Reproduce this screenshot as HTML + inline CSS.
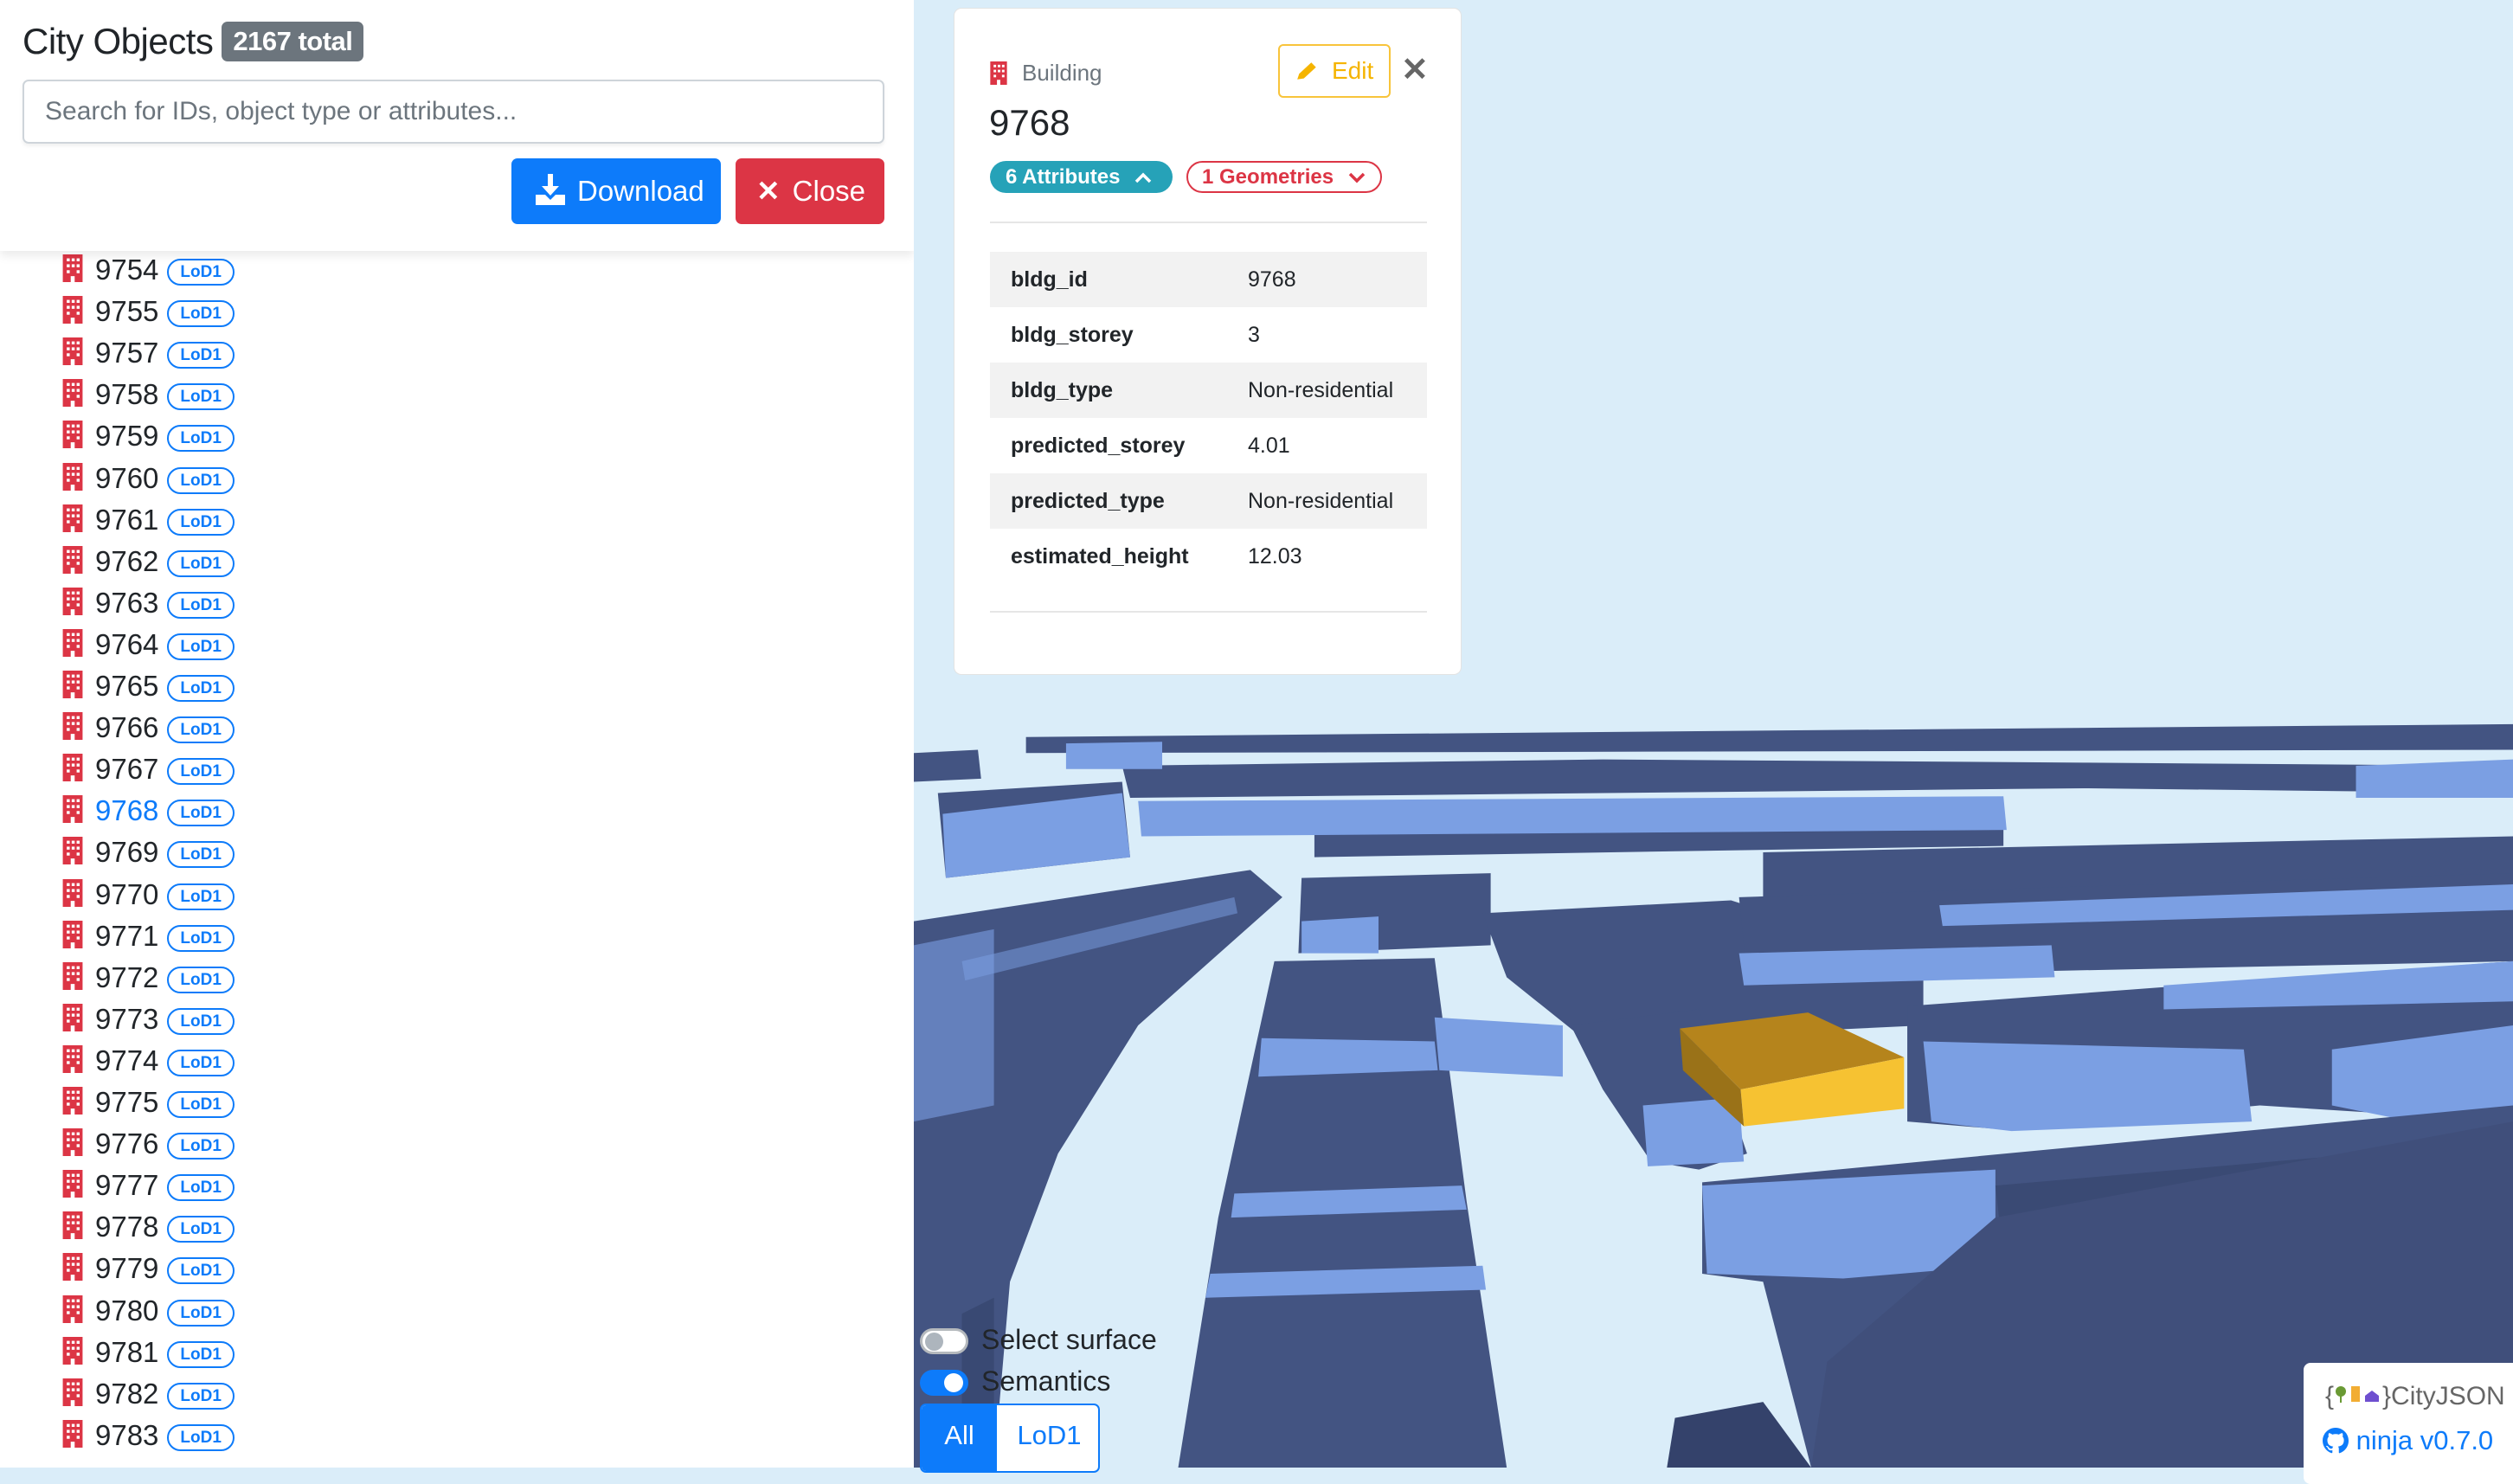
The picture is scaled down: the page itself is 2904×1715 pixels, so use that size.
<!DOCTYPE html>
<html><head><meta charset="utf-8"><style>
*{box-sizing:border-box;margin:0;padding:0}
body{width:2904px;height:1696px;overflow:hidden;font-family:"Liberation Sans",sans-serif;background:#daedf9;position:relative;color:#212529}
#left{position:absolute;left:0;top:0;width:1056px;height:1696px;background:#fff;overflow:hidden}
#hdr{position:absolute;left:0;top:0;width:1056px;height:290px;background:#fff;box-shadow:0 6px 10px rgba(0,0,0,.08);z-index:2}
h1{position:absolute;left:26px;top:24px;font-size:42px;font-weight:normal;letter-spacing:-0.5px}
.badge{display:inline-block;background:#6c757d;color:#fff;font-size:31px;font-weight:bold;padding:5px 13px;border-radius:7px;vertical-align:4px;margin-left:10px}
#search{position:absolute;left:26px;top:92px;width:996px;height:74px;border:2px solid #ced4da;border-radius:7px;font-size:30px;color:#6c757d;padding:18px 24px;box-shadow:0 3px 5px rgba(0,0,0,.06)}
.btn{position:absolute;top:183px;height:76px;border-radius:7px;color:#fff;font-size:33px;line-height:76px}
#dl{left:591px;width:242px;background:#0d7bfa;padding-left:28px}
#cl{left:850px;width:172px;background:#dc3545;padding-left:24px}
.row{position:absolute;left:72px;height:48px;font-size:33px;line-height:48px;white-space:nowrap}
.row svg{vertical-align:-3px;margin-right:14px}
.lod{display:inline-block;border:2.5px solid #0d7bfa;color:#0d7bfa;font-size:19px;font-weight:bold;border-radius:16px;padding:0 13px;height:31px;line-height:27px;vertical-align:3px;margin-left:10px}
#map{position:absolute;left:1056px;top:0}
#card{position:absolute;left:1102px;top:9px;width:587px;height:771px;background:#fff;border-radius:9px;border:1px solid #e3e3e3}
.tbl{position:absolute;left:41px;width:505px;font-size:25px}
.tr{height:64px;line-height:64px;position:relative}
.tr:nth-child(odd){background:#f2f2f2}
.tr b{position:absolute;left:24px}
.tr span{position:absolute;left:298px}
.tog{position:absolute;left:1063px;width:56px;height:30px;border-radius:16px}
.lbl{position:absolute;left:1134px;font-size:32px;color:#212529}
</style></head><body>
<div id="left">
<div id="hdr">
<h1>City Objects<span class="badge">2167 total</span></h1>
<div id="search">Search for IDs, object type or attributes...</div>
<div class="btn" id="dl"><svg width="34" height="36" viewBox="0 0 34 36" style="vertical-align:-5px;margin-right:14px"><rect x="14" y="0" width="6" height="18" fill="#fff"/><path d="M7 14 L17 25 L27 14Z" fill="#fff"/><path d="M0 24 L11 24 L17 30 L23 24 L34 24 L34 36 L0 36Z" fill="#fff"/></svg>Download</div>
<div class="btn" id="cl"><span style="font-weight:bold;margin-right:14px">✕</span>Close</div>
</div>
<div id="list"></div>
</div>
<svg id="map" width="1848" height="1696" viewBox="570 0 998 916" preserveAspectRatio="none">
<rect x="570" y="0" width="998" height="916" fill="#daedf9"/>
<g fill="#435482">
<path d="M640 460 L1568 452 L1568 468 L640 470Z"/>
<path d="M570 470 L610 468 L612 486 L570 488Z"/>
<path d="M585 495 L700 488 L705 535 L590 548Z"/>
<path d="M700 478 L1000 474 L1300 476 L1568 478 L1568 495 L1300 492 L705 498Z"/>
<path d="M820 520 L1250 515 L1250 528 L820 535Z"/>
<path d="M1100 532 L1568 522 L1568 548 L1100 560Z"/>
</g>
<g fill="#7b9fe3">
<path d="M588 508 L700 495 L705 535 L590 548Z"/>
<path d="M710 500 L1250 497 L1252 518 L712 522Z"/>
<path d="M665 464 L725 463 L725 480 L665 480Z"/>
<path d="M1470 478 L1568 474 L1568 498 L1470 498Z"/>
</g>
<path d="M570 575 L780 543 L800 560 L710 640 L660 720 L630 800 L620 916 L570 916Z" fill="#435482"/>
<path d="M570 590 L620 580 L620 690 L570 700Z" fill="#7b9fe3" opacity=".6"/>
<path d="M600 600 L770 560 L772 570 L602 612Z" fill="#7b9fe3" opacity=".5"/>
<path d="M600 820 L620 810 L620 916 L600 916Z" fill="#2f3d63" opacity=".5"/>
<path d="M795 600 L895 598 L915 750 L940 916 L735 916 L760 760Z" fill="#435482"/>
<path d="M787 648 L895 650 L897 668 L785 672Z" fill="#7b9fe3"/>
<path d="M770 745 L912 740 L915 755 L768 760Z" fill="#7b9fe3"/>
<path d="M755 795 L925 790 L927 805 L752 810Z" fill="#7b9fe3"/>
<path d="M812 548 L930 545 L930 590 L810 595Z" fill="#435482"/>
<path d="M812 575 L860 572 L860 595 L812 595Z" fill="#7b9fe3"/>
<path d="M925 570 L1080 562 L1200 600 L1200 640 L990 650 L940 610Z" fill="#435482"/>
<path d="M1085 560 L1568 545 L1568 600 L1090 610Z" fill="#435482"/>
<path d="M1085 595 L1280 590 L1282 610 L1088 615Z" fill="#7b9fe3"/>
<path d="M1210 565 L1568 552 L1568 568 L1212 578Z" fill="#7b9fe3"/>
<path d="M1190 628 L1568 600 L1568 700 L1410 690 L1250 705 L1190 700Z" fill="#435482"/>
<path d="M980 640 L1060 630 L1090 720 L1060 730 L1030 725 L1000 680Z" fill="#435482"/>
<path d="M895 635 L975 640 L975 672 L898 668Z" fill="#7b9fe3"/>
<path d="M1025 690 L1085 685 L1088 725 L1028 728Z" fill="#7b9fe3"/>
<path d="M1200 650 L1400 655 L1405 700 L1255 706 L1205 700Z" fill="#7b9fe3"/>
<path d="M1455 655 L1568 640 L1568 700 L1505 700 L1455 690Z" fill="#7b9fe3"/>
<path d="M1350 615 L1568 600 L1568 625 L1350 630Z" fill="#7b9fe3"/>
<path d="M1048 642 L1128 632 L1188 660 L1086 680Z" fill="#b5841c"/>
<path d="M1086 680 L1188 660 L1188 692 L1088 703Z" fill="#f6c232"/>
<path d="M1048 642 L1086 680 L1088 703 L1050 668Z" fill="#9a7218"/>
<path d="M1062 738 L1568 690 L1568 916 L1130 916 L1100 800 L1062 795Z" fill="#435482"/>
<path d="M1062 740 L1245 730 L1245 790 L1150 798 L1065 795Z" fill="#7b9fe3"/>
<path d="M1245 740 L1568 712 L1568 760 L1250 785Z" fill="#3a4a74"/>
<path d="M1245 760 L1568 700 L1568 916 L1130 916 L1140 850Z" fill="#404f7b"/>
<path d="M1045 885 L1100 875 L1130 916 L1040 916Z" fill="#34426b"/>
</svg>
<div id="card">
<svg style="position:absolute;left:41px;top:61px" width="20" height="27" viewBox="0 0 20 28"><path d="M0 0H20V28H12V22H8V28H0Z" fill="#dc3545"/><g fill="#fff"><rect x="4" y="4" width="3" height="3"/><rect x="9" y="4" width="3" height="3"/><rect x="14" y="4" width="3" height="3"/><rect x="4" y="10" width="3" height="3"/><rect x="9" y="10" width="3" height="3"/><rect x="14" y="10" width="3" height="3"/><rect x="4" y="16" width="3" height="3"/><rect x="14" y="16" width="3" height="3"/></g></svg>
<div style="position:absolute;left:78px;top:58px;font-size:26px;color:#6c757d;line-height:32px">Building</div>
<div style="position:absolute;left:40px;top:111px;font-size:42px;line-height:1">9768</div>
<div style="position:absolute;left:374px;top:41px;width:130px;height:62px;border:2px solid #f8c43b;border-radius:6px;color:#f5b400;font-size:28px;line-height:58px;padding-left:18px"><svg width="28" height="26" viewBox="0 0 26 22" style="vertical-align:-4px;margin-right:14px"><path d="M2 20 L4 14 L17 2 L22 7 L9 19Z" fill="#f5b400"/></svg>Edit</div>
<div style="position:absolute;left:516px;top:48px;font-size:38px;font-weight:bold;color:#666">✕</div>
<div style="position:absolute;left:41px;top:176px;width:211px;height:37px;border-radius:19px;background:#26a2b8;color:#fff;font-size:24px;font-weight:bold;line-height:37px;padding-left:18px">6 Attributes <svg width="20" height="14" viewBox="0 0 20 14" style="margin-left:10px"><path d="M2 12 L10 4 L18 12" stroke="#fff" stroke-width="3.5" fill="none"/></svg></div>
<div style="position:absolute;left:268px;top:176px;width:226px;height:37px;border-radius:19px;border:2px solid #dc3545;color:#dc3545;font-size:24px;font-weight:bold;line-height:33px;padding-left:16px">1 Geometries <svg width="20" height="14" viewBox="0 0 20 14" style="margin-left:10px"><path d="M2 3 L10 11 L18 3" stroke="#dc3545" stroke-width="3.5" fill="none"/></svg></div>
<div style="position:absolute;left:41px;top:246px;width:505px;height:2px;background:#e6e6e6"></div>
<div class="tbl" style="top:281px">
<div class="tr"><b>bldg_id</b><span>9768</span></div>
<div class="tr"><b>bldg_storey</b><span>3</span></div>
<div class="tr"><b>bldg_type</b><span>Non-residential</span></div>
<div class="tr"><b>predicted_storey</b><span>4.01</span></div>
<div class="tr"><b>predicted_type</b><span>Non-residential</span></div>
<div class="tr"><b>estimated_height</b><span>12.03</span></div>
</div>
<div style="position:absolute;left:41px;top:696px;width:505px;height:2px;background:#e6e6e6"></div>
</div>
<div class="tog" style="top:1535px;background:#fff;border:3px solid #b5b9bd"><div style="position:absolute;left:3px;top:2px;width:21px;height:21px;border-radius:50%;background:#adb5bd"></div></div>
<div class="lbl" style="top:1530px">Select surface</div>
<div class="tog" style="top:1583px;background:#0d7bfa"><div style="position:absolute;left:28px;top:4px;width:22px;height:22px;border-radius:50%;background:#fff"></div></div>
<div class="lbl" style="top:1578px">Semantics</div>
<div style="position:absolute;left:1063px;top:1622px;width:208px;height:80px;border:2px solid #0d7bfa;border-radius:7px;background:#fff;overflow:hidden;font-size:31px">
<div style="position:absolute;left:0;top:0;width:87px;height:80px;background:#0d7bfa;color:#fff;text-align:center;line-height:70px">All</div>
<div style="position:absolute;left:87px;top:0;width:121px;color:#0d7bfa;text-align:center;line-height:70px">LoD1</div></div>
<div style="position:absolute;left:2662px;top:1575px;width:260px;height:140px;background:#fff;border-radius:8px">
<div style="position:absolute;left:25px;top:22px;font-size:30px;color:#666;white-space:nowrap">{<svg width="56" height="24" viewBox="0 0 56 24"><circle cx="8" cy="9" r="6" fill="#6a9a34"/><rect x="7" y="12" width="2" height="10" fill="#6a9a34"/><rect x="20" y="3" width="10" height="18" fill="#f2ad33"/><path d="M36 21 V14 L44 8 L52 14 V21Z" fill="#6e4fcf"/></svg>}CityJSON</div>
<div style="position:absolute;left:22px;top:72px;font-size:31px;color:#0d7bfa;white-space:nowrap"><svg width="30" height="30" viewBox="0 0 16 16" style="vertical-align:-5px"><path fill="#0d7bfa" d="M8 0C3.58 0 0 3.58 0 8c0 3.54 2.29 6.53 5.47 7.59.4.07.55-.17.55-.38v-1.33c-2.23.48-2.7-1.07-2.7-1.07-.36-.92-.89-1.17-.89-1.17-.73-.5.06-.49.06-.49.8.06 1.23.83 1.23.83.71 1.22 1.87.87 2.33.66.07-.52.28-.87.51-1.07-1.78-.2-3.64-.89-3.64-3.95 0-.87.31-1.59.82-2.15-.08-.2-.36-1.02.08-2.12 0 0 .67-.21 2.2.82a7.6 7.6 0 014 0c1.53-1.04 2.2-.82 2.2-.82.44 1.1.16 1.92.08 2.12.51.56.82 1.27.82 2.15 0 3.07-1.87 3.75-3.65 3.95.29.25.54.73.54 1.48v2.2c0 .21.15.46.55.38A8.01 8.01 0 0016 8c0-4.42-3.58-8-8-8z"/></svg> ninja v0.7.0</div></div>
<script>
var ids=[9754,9755];for(var i=9757;i<=9783;i++)ids.push(i);
var h='',ic='<svg width="24" height="32" viewBox="0 0 20 28"><path d="M0 0H20V28H12V22H8V28H0Z" fill="#dc3545"/><g fill="#fff"><rect x="4" y="4" width="3" height="3"/><rect x="9" y="4" width="3" height="3"/><rect x="14" y="4" width="3" height="3"/><rect x="4" y="10" width="3" height="3"/><rect x="9" y="10" width="3" height="3"/><rect x="14" y="10" width="3" height="3"/><rect x="4" y="16" width="3" height="3"/><rect x="14" y="16" width="3" height="3"/></g></svg>';
ids.forEach(function(d,k){h+='<div class="row" style="top:'+(288+k*48.1)+'px">'+ic+'<span style="color:'+(d==9768?'#0d7bfa':'#212529')+'">'+d+'</span><span class="lod">LoD1</span></div>';});
document.getElementById('list').innerHTML=h;
</script>
</body></html>
